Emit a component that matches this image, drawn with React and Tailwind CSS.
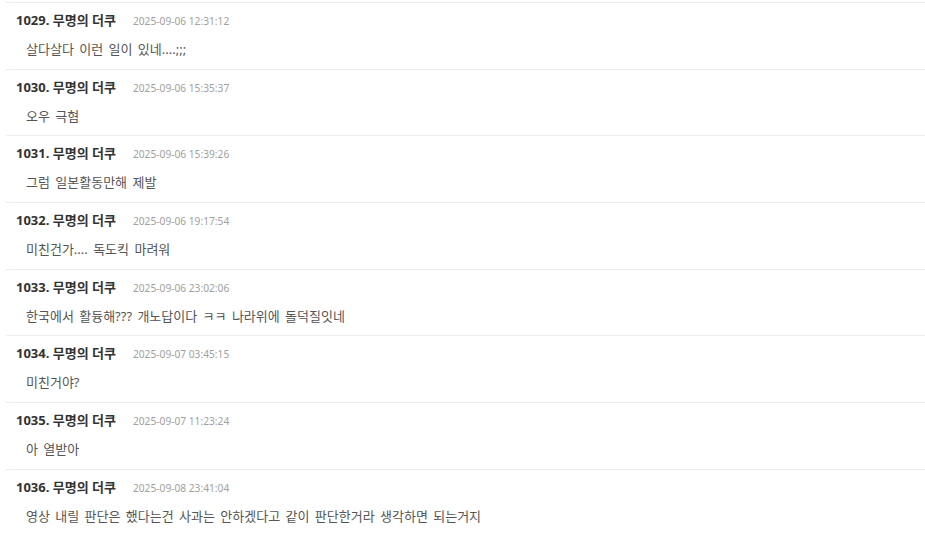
import React from 'react';

const comments = [
  { no: 1029, date: '2025-09-06 12:31:12', text: '살다살다 이런 일이 있네....;;;' },
  { no: 1030, date: '2025-09-06 15:35:37', text: '오우 극혐' },
  { no: 1031, date: '2025-09-06 15:39:26', text: '그럼 일본활동만해 제발' },
  { no: 1032, date: '2025-09-06 19:17:54', text: '미친건가.... 독도킥 마려워' },
  { no: 1033, date: '2025-09-06 23:02:06', text: '한국에서 활듕해??? 개노답이다 ㅋㅋ 나라위에 돌덕질잇네' },
  { no: 1034, date: '2025-09-07 03:45:15', text: '미친거야?' },
  { no: 1035, date: '2025-09-07 11:23:24', text: '아 열받아' },
  { no: 1036, date: '2025-09-08 23:41:04', text: '영상 내릴 판단은 했다는건 사과는 안하겠다고 같이 판단한거라 생각하면 되는거지' },
];

const App = () => {
  return (
    <div
      className="w-[925px] h-[536px] overflow-hidden bg-white pt-[2px] pl-[6px]"
      style={{ fontFamily: '"Noto Sans", "Noto Sans CJK KR", sans-serif' }}
    >
      <ul>
        {comments.map((c) => (
          <li key={c.no} className="h-[66.7px] border-t border-[#f0ede9] pl-[10px] pt-[8px]">
            <div className="flex items-baseline h-[20px]">
              <span className="text-[13px] font-bold text-[#333]">
                {c.no}. 무명의 더쿠
              </span>
              <span className="ml-[17px] text-[10.2px] text-[#a0a0a0]">{c.date}</span>
            </div>
            <p className="mt-[8px] ml-[10px] text-[13px] text-[#555] leading-[20px] [word-spacing:2px]">{c.text}</p>
          </li>
        ))}
      </ul>
    </div>
  );
};

export default App;
